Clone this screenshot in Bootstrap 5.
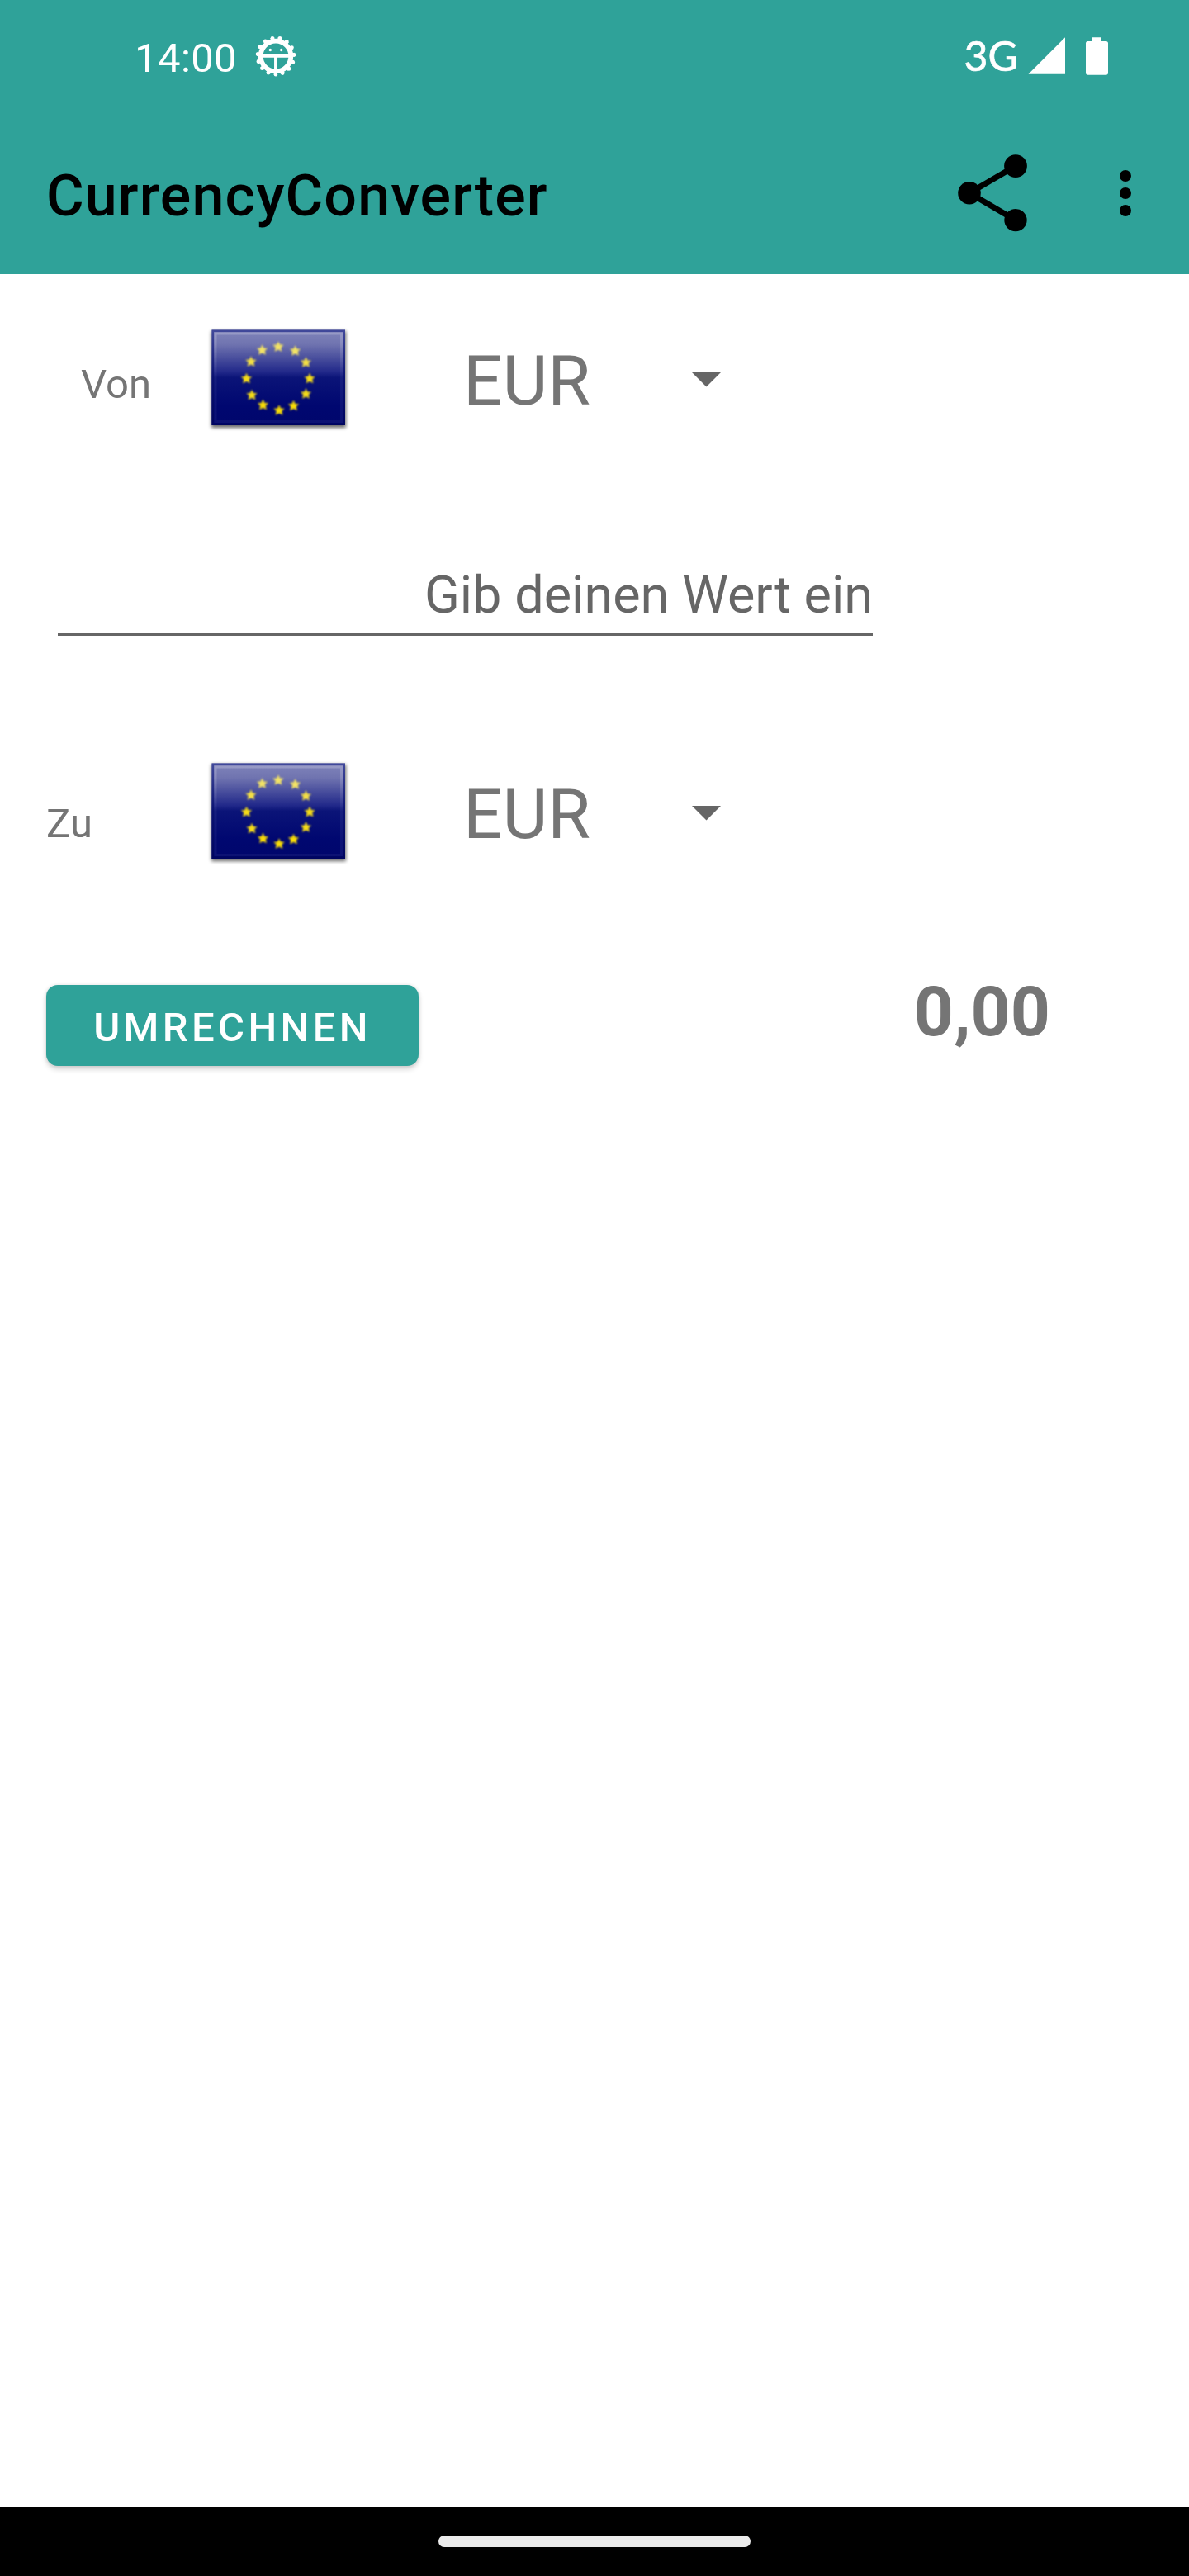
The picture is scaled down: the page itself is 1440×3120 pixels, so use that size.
<!DOCTYPE html>
<html lang="de">
<head>
<meta charset="utf-8">
<meta name="viewport" content="width=device-width, initial-scale=1">
<title>CurrencyConverter</title>
<link rel="stylesheet" href="https://cdn.jsdelivr.net/npm/bootstrap@5.3.0/dist/css/bootstrap.min.css">
<style>
  :root { --teal: #2fa299; --label: #757575; --hint: #666; }
  body { width: 1440px; height: 3120px; overflow: hidden; font-family: Roboto, "Liberation Sans", sans-serif; background: #fff; color: var(--label); line-height: 1; }
  svg { display: block; flex: none; }
  .app-head { background: var(--teal); height: 332px; }
  .status-line { height: 136px; padding: 0 97px 0 163px; color: #fff; font-size: 49px; }
  .status-icon { margin-top: 42px; }
  .clock { margin-top: 46px; width: 145px; letter-spacing: .4px; }
  .net-type { font-family: Lato, sans-serif; font-size: 50px; margin-top: 42px; margin-right: 12px; -webkit-text-stroke: .7px #fff; }
  .title-line { height: 196px; padding: 0 70px 0 56px; color: #000; }
  .app-title { font-size: 70px; font-weight: 500; margin: 66px 0 0; line-height: 1; letter-spacing: 1.1px; }
  .title-actions { margin-top: 44px; }
  .pick-row { height: 136px; }
  .pick-from { margin-top: 57px; }
  .pick-to { margin-top: 144px; }
  .pick-label { font-size: 49px; margin-left: 56px; width: 192px; }
  .pick-from .pick-label { padding-left: 42px; margin-top: 52px; }
  .pick-to .pick-label { margin-top: 59px; }
  .pick-code { font-size: 84px; margin: 31px 0 0 135px; width: 277px; }
  .pick-arrow { margin-top: 62px; }
  .amount { width: 987px; height: 120px; margin: 125px 0 0 70px; padding: 39px 0 0; border: 0; border-bottom: 3.5px solid var(--hint); color: var(--hint); font-size: 63px; text-align: right; }
  .result-row { margin: 143px 0 0 56px; }
  .btn.convert { width: 451px; height: 98px; border: 0; border-radius: 14px; background: var(--teal); color: #fff; font-size: 49px; font-weight: 500; letter-spacing: 4.37px; line-height: 1; padding: 4px 0 0 0; box-shadow: 0 4px 6px rgba(0,0,0,.17), 0 0 5px rgba(0,0,0,.1); }
  .total { font-size: 84px; font-weight: 700; margin: -9px 168px 0 0; }
  .nav-strip { height: 84px; background: #000; }
  .nav-pill { width: 378px; height: 14px; border-radius: 7px; background: #ebebeb; }
</style>
</head>
<body class="d-flex flex-column">

<svg width="0" height="0" class="position-absolute" aria-hidden="true">
  <defs>
    <linearGradient id="gloss" x1="0" y1="0" x2="0" y2="1">
      <stop offset="0" stop-color="#8084ba"/><stop offset=".15" stop-color="#7074b0"/>
      <stop offset=".44" stop-color="#22298a"/><stop offset=".5" stop-color="#0b1478"/>
      <stop offset=".8" stop-color="#000770"/><stop offset="1" stop-color="#00066c"/>
    </linearGradient>
    <linearGradient id="rim" x1="0" y1="0" x2="0" y2="1">
      <stop offset="0" stop-color="#fff" stop-opacity=".2"/><stop offset=".45" stop-color="#fff" stop-opacity=".05"/><stop offset="1" stop-color="#fff" stop-opacity=".05"/>
    </linearGradient>
    <linearGradient id="edge" x1="0" y1="0" x2="0" y2="1">
      <stop offset="0" stop-color="#40489a"/><stop offset=".5" stop-color="#0a1272"/><stop offset="1" stop-color="#000560"/>
    </linearGradient>
    <linearGradient id="gold" gradientUnits="userSpaceOnUse" x1="0" y1="25" x2="0" y2="113">
      <stop offset="0" stop-color="#f4e468"/><stop offset=".5" stop-color="#f2da20"/><stop offset="1" stop-color="#f6dc08"/>
    </linearGradient>
    <filter id="drop" x="-10%" y="-10%" width="120%" height="125%"><feGaussianBlur stdDeviation="2"/></filter>
    <filter id="soft" x="-10%" y="-10%" width="120%" height="120%" color-interpolation-filters="sRGB"><feGaussianBlur stdDeviation="1"/></filter>
    <path id="star" d="M0-6.800 2-2.600 6.600-2.200 3.300 1.100 4.400 5.700 0 3.500-4.400 5.700-3.300 1.100-6.600-2.200-2-2.600Z"/>
    <g id="flag">
      <rect x="8" y="12" width="163" height="117" fill="#000" opacity=".6" filter="url(#drop)"/>
      <rect x="8.500" y="10.500" width="161.500" height="115.500" fill="url(#gloss)"/>
      <rect x="9.800" y="11.800" width="158.900" height="112.900" fill="none" stroke="url(#edge)" stroke-width="2.600"/>
      <rect x="13" y="15" width="152.500" height="106.500" fill="none" stroke="url(#rim)" stroke-width="3"/>
      <!-- stars inherit one flat tone per height band -->
      <g filter="url(#soft)">
        <g fill="#f3e365"><use href="#star" x="89" y="31"/><use href="#star" x="109.500" y="36"/><use href="#star" x="69.500" y="35"/></g>
        <g fill="#f3df45"><use href="#star" x="122.500" y="50"/><use href="#star" x="56" y="49"/></g>
        <g fill="#f5dc18"><use href="#star" x="127" y="69.500"/><use href="#star" x="50.500" y="69.500"/><use href="#star" x="122.500" y="88"/><use href="#star" x="57" y="89.500"/></g>
        <g fill="#f8dc06"><use href="#star" x="107.500" y="102.500"/><use href="#star" x="90" y="108"/><use href="#star" x="70.500" y="101.500"/></g>
      </g>
    </g>
  </defs>
</svg>

<header class="app-head flex-shrink-0">
  <div class="status-line d-flex align-items-start">
    <span class="clock">14:00</span>
    <svg class="status-icon" width="52" height="52" viewBox="-26 -26 52 52">
      <g fill="none" stroke="#fff">
        <circle r="18.300" stroke-width="5.800"/>
        <circle r="22.200" stroke-width="4.600" stroke-linecap="round" stroke-dasharray="0 9.299" transform="rotate(90)"/>
        <circle r="20.500" stroke-width="4.800" stroke-dasharray="4.600 3.987" stroke-dashoffset="2.300" transform="rotate(90)"/>
        <path d="M-16-.2H16M0 0V17" stroke-width="3.900"/>
      </g>
      <circle cx="-6.700" cy="-7.500" r="1.700" fill="#fff"/><circle cx="6.700" cy="-7.500" r="1.700" fill="#fff"/>
    </svg>
    <span class="net-type ms-auto">3G</span>
    <svg class="status-icon" width="98" height="52" viewBox="1245 42 98 52" fill="#fff">
      <path d="M1245.500 89.700H1290V45.300Z"/>
      <path d="M1323 45.300H1334V50H1339.500Q1342 50 1342 52.500V88Q1342 90.700 1339.500 90.700H1317.500Q1315 90.700 1315 88V52.500Q1315 50 1317.500 50H1323Z"/>
    </svg>
  </div>
  <div class="title-line d-flex align-items-start">
    <h1 class="app-title">CurrencyConverter</h1>
    <svg class="title-actions ms-auto" width="210" height="108" viewBox="1160 180 210 108">
      <path d="M1230 201 1174 233.700 1230 266.700" fill="none" stroke="#000" stroke-width="7"/>
      <circle cx="1174" cy="233.700" r="13.800"/><circle cx="1230" cy="201.100" r="13.900"/><circle cx="1230" cy="266.600" r="13.700"/>
      <circle cx="1363" cy="213" r="7"/><circle cx="1363" cy="234" r="7"/><circle cx="1363" cy="255" r="7"/>
    </svg>
  </div>
</header>

<main class="flex-grow-1">
  <div class="pick-row pick-from d-flex align-items-start">
    <span class="pick-label">Von</span>
    <svg width="178" height="136"><use href="#flag"/></svg>
    <span class="pick-code">EUR</span>
    <svg class="pick-arrow" width="35" height="18"><path d="M0 0H35L17.500 17.500Z" fill="#666"/></svg>
  </div>

  <div class="amount">Gib deinen Wert ein</div>

  <div class="pick-row pick-to d-flex align-items-start">
    <span class="pick-label">Zu</span>
    <svg width="178" height="136"><use href="#flag"/></svg>
    <span class="pick-code">EUR</span>
    <svg class="pick-arrow" width="35" height="18"><path d="M0 0H35L17.500 17.500Z" fill="#666"/></svg>
  </div>

  <div class="result-row d-flex justify-content-between align-items-start">
    <button type="button" class="btn convert">UMRECHNEN</button>
    <span class="total">0,00</span>
  </div>
</main>

<footer class="nav-strip flex-shrink-0 d-flex align-items-center justify-content-center">
  <div class="nav-pill"></div>
</footer>

<script src="https://cdn.jsdelivr.net/npm/bootstrap@5.3.0/dist/js/bootstrap.bundle.min.js"></script>
</body>
</html>
